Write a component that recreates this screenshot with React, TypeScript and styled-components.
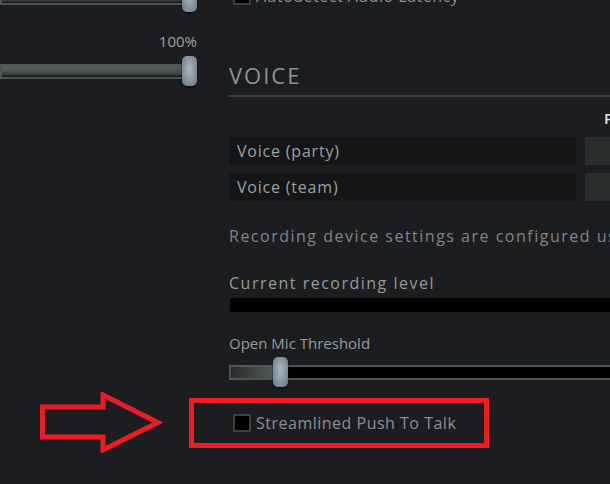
import { FC } from 'react'
import styled, { createGlobalStyle } from 'styled-components'

const GlobalStyle = createGlobalStyle`
  html, body {
    margin: 0;
    padding: 0;
    background: #1c1d21;
  }
  body {
    font-family: "Open Sans", "DejaVu Sans", sans-serif;
    overflow: hidden;
  }
`

const Page = styled.div`
  width: 610px;
  height: 484px;
  overflow: hidden;
  display: flex;
  flex-direction: column;
  background: #1c1d21;
`

const Columns = styled.div`
  display: flex;
  align-items: flex-start;
`

const LeftCol = styled.div`
  width: 197px;
  flex-shrink: 0;
  display: flex;
  flex-direction: column;
  margin-top: -18px;
`

const RightCol = styled.div`
  width: 420px;
  flex-shrink: 0;
  margin-left: 32px;
  margin-top: -14px;
  display: flex;
  flex-direction: column;
`

// slider
const SliderWrap = styled.div<{ $gap?: number }>`
  position: relative;
  height: 30px;
  display: flex;
  align-items: center;
  margin-top: ${({ $gap }) => $gap ?? 0}px;
`

const Track = styled.div<{ $full?: boolean }>`
  flex: 1;
  height: 11px;
  border-top: 2px solid #4f5856;
  border-bottom: 2px solid #4b5452;
  border-left: 2px solid #4b5452;
  background: ${({ $full }) =>
    $full
      ? 'linear-gradient(to bottom, #56615f 0%, #4a5452 45%, #333b3a 80%, #0d0f0f 100%)'
      : '#000'};
`

const TrackFill = styled.div`
  height: 100%;
  background: linear-gradient(to right, #262c2b 0%, #3e4847 60%, #4d5857 100%);
`

const Thumb = styled.div`
  position: absolute;
  top: 0;
  width: 15px;
  height: 30px;
  border-radius: 5px;
  background: radial-gradient(
    ellipse at 50% 45%,
    #a9b6c4 0%,
    #8d99a7 45%,
    #6a7480 100%
  );
  box-shadow: 0 1px 2px rgba(0, 0, 0, 0.8);
`

const Slider: FC<{ value: number; full?: boolean; gap?: number }> = ({
  value,
  full,
  gap,
}) => (
  <SliderWrap $gap={gap}>
    <Track $full={full}>
      {!full && <TrackFill style={{ width: `calc(${value * 100}% - 4px)` }} />}
    </Track>
    <Thumb style={{ left: `calc(${value} * (100% - 15px))` }} />
  </SliderWrap>
)

const ValueLabel = styled.div`
  margin-top: 19px;
  height: 20px;
  line-height: 20px;
  font-size: 15px;
  color: #9ba2a3;
  text-align: right;
`

// checkbox rows
const CheckRow = styled.div<{ $gap?: number }>`
  display: flex;
  align-items: center;
  height: 20px;
  padding-left: 4px;
  margin-top: ${({ $gap }) => $gap ?? 0}px;
`

const Box = styled.span`
  width: 14px;
  height: 14px;
  border: 2px solid #39403e;
  background: #000;
  flex-shrink: 0;
`

const CheckLabel = styled.span`
  margin-left: 5px;
  font-size: 16px;
  letter-spacing: 0.5px;
  color: #8b9192;
  white-space: nowrap;
`

const Heading = styled.h2`
  margin: 54px 0 0 0;
  height: 30px;
  line-height: 30px;
  font-size: 22px;
  font-weight: 400;
  letter-spacing: 2px;
  color: #8a9599;
  padding-bottom: 5px;
  border-bottom: 2px solid #3c3f43;
`

const BindGrid = styled.div<{ $gap?: number }>`
  display: grid;
  grid-template-columns: 347px 1fr;
  column-gap: 9px;
  margin-top: ${({ $gap }) => $gap ?? 0}px;
`

const ColHead = styled.div`
  grid-column: 2;
  height: 20px;
  line-height: 20px;
  padding-left: 19px;
  font-size: 15px;
  font-weight: 600;
  color: #e6e6e6;
  white-space: nowrap;
`

const BindName = styled.div`
  height: 28px;
  line-height: 28px;
  padding-left: 8px;
  background: #141516;
  font-size: 16px;
  letter-spacing: 0.8px;
  color: #9ca1a2;
`

const BindKey = styled.div`
  height: 28px;
  background: #2a2d2e;
`

const Note = styled.div<{ $gap: number; $bright?: boolean }>`
  margin-top: ${({ $gap }) => $gap}px;
  height: 22px;
  line-height: 22px;
  font-size: 16px;
  letter-spacing: 1.5px;
  color: ${({ $bright }) => ($bright ? '#959b9c' : '#7f8687')};
  white-space: nowrap;
`

const LevelBar = styled.div`
  margin: 4px 0 0 1px;
  height: 14px;
  background: #000;
`

const FieldLabel = styled.div`
  margin-top: 21px;
  height: 20px;
  line-height: 20px;
  font-size: 15px;
  color: #959b9c;
`

// annotation
const CalloutRow = styled.div`
  display: flex;
  align-items: center;
  margin-top: 5px;
  padding-left: 40px;
  gap: 26px;
`

const Frame = styled.div`
  box-sizing: border-box;
  width: 300px;
  height: 50px;
  border: 5px solid #ec1c24;
  display: flex;
  align-items: center;
  padding-left: 35px;
`

const Arrow: FC = () => (
  <svg width="123" height="61" viewBox="0 0 123 61">
    <polygon
      points="2.5,15 63,15 63,3 118,30.5 63,58 63,45 2.5,45"
      fill="none"
      stroke="#ec1c24"
      strokeWidth="5"
      strokeLinejoin="miter"
    />
  </svg>
)

const App: FC = () => (
  <>
    <GlobalStyle />
    <Page>
      <Columns>
        <LeftCol>
          <Slider value={1} full />
          <ValueLabel>100%</ValueLabel>
          <Slider value={1} full gap={5} />
        </LeftCol>
        <RightCol>
          <CheckRow>
            <Box />
            <CheckLabel>Autodetect Audio Latency</CheckLabel>
          </CheckRow>
          <Heading>VOICE</Heading>
          <BindGrid $gap={11}>
            <ColHead>Primary</ColHead>
          </BindGrid>
          <BindGrid $gap={9}>
            <BindName>Voice (party)</BindName>
            <BindKey />
          </BindGrid>
          <BindGrid $gap={8}>
            <BindName>Voice (team)</BindName>
            <BindKey />
          </BindGrid>
          <Note $gap={24}>Recording device settings are configured using Windows</Note>
          <Note $gap={25} $bright>
            Current recording level
          </Note>
          <LevelBar />
          <FieldLabel>Open Mic Threshold</FieldLabel>
          <Slider value={0.109} gap={4} />
        </RightCol>
      </Columns>
      <CalloutRow>
        <Arrow />
        <Frame>
          <CheckRow>
            <Box />
            <CheckLabel>Streamlined Push To Talk</CheckLabel>
          </CheckRow>
        </Frame>
      </CalloutRow>
    </Page>
  </>
)

export default App
